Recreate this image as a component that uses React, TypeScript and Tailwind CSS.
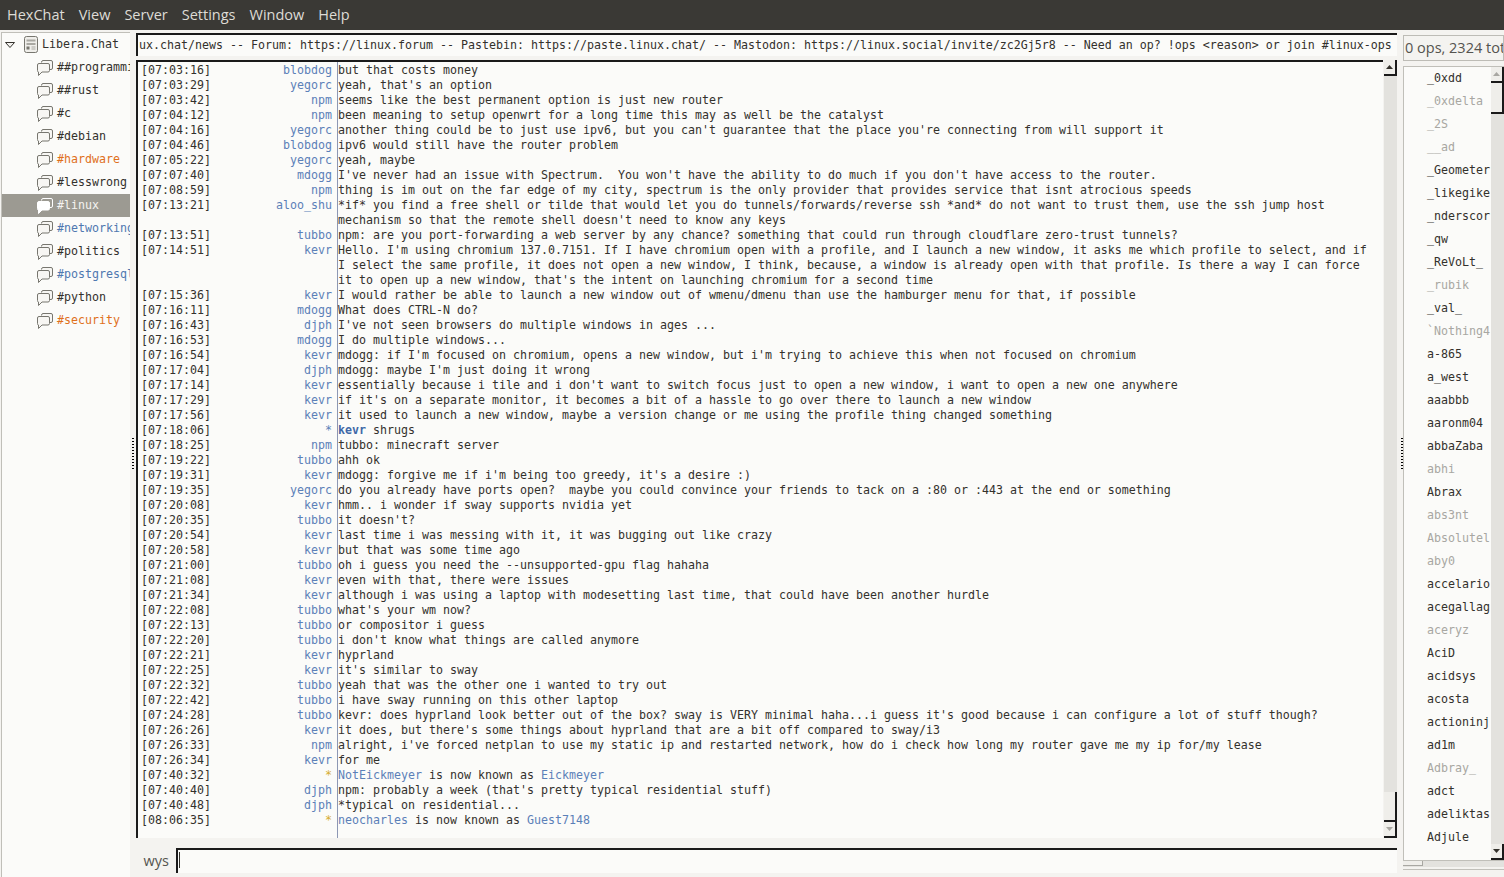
import React from 'react';

const menus = ['HexChat', 'View', 'Server', 'Settings', 'Window', 'Help'];

const channels = [
  { name: '##programming', color: 'text-[#33312c]' },
  { name: '##rust', color: 'text-[#33312c]' },
  { name: '#c', color: 'text-[#33312c]' },
  { name: '#debian', color: 'text-[#33312c]' },
  { name: '#hardware', color: 'text-[#e0701c]' },
  { name: '#lesswrong', color: 'text-[#33312c]' },
  { name: '#linux', color: 'text-[#f4f3f0]', active: true },
  { name: '#networking', color: 'text-[#4f78b0]' },
  { name: '#politics', color: 'text-[#33312c]' },
  { name: '#postgresql', color: 'text-[#4f78b0]' },
  { name: '#python', color: 'text-[#33312c]' },
  { name: '#security', color: 'text-[#e0701c]' },
];

type Line = { t: string; n: string; m: string[]; kind?: 'action' | 'nickchange'; a?: string; b?: string };

const lines: Line[] = [
  { t: '07:03:16', n: 'blobdog', m: ['but that costs money'] },
  { t: '07:03:29', n: 'yegorc', m: ["yeah, that's an option"] },
  { t: '07:03:42', n: 'npm', m: ['seems like the best permanent option is just new router'] },
  { t: '07:04:12', n: 'npm', m: ['been meaning to setup openwrt for a long time this may as well be the catalyst'] },
  { t: '07:04:16', n: 'yegorc', m: ["another thing could be to just use ipv6, but you can't guarantee that the place you're connecting from will support it"] },
  { t: '07:04:46', n: 'blobdog', m: ['ipv6 would still have the router problem'] },
  { t: '07:05:22', n: 'yegorc', m: ['yeah, maybe'] },
  { t: '07:07:40', n: 'mdogg', m: ["I've never had an issue with Spectrum.  You won't have the ability to do much if you don't have access to the router."] },
  { t: '07:08:59', n: 'npm', m: ['thing is im out on the far edge of my city, spectrum is the only provider that provides service that isnt atrocious speeds'] },
  { t: '07:13:21', n: 'aloo_shu', m: ['*if* you find a free shell or tilde that would let you do tunnels/forwards/reverse ssh *and* do not want to trust them, use the ssh jump host', "mechanism so that the remote shell doesn't need to know any keys"] },
  { t: '07:13:51', n: 'tubbo', m: ['npm: are you port-forwarding a web server by any chance? something that could run through cloudflare zero-trust tunnels?'] },
  { t: '07:14:51', n: 'kevr', m: ["Hello. I'm using chromium 137.0.7151. If I have chromium open with a profile, and I launch a new window, it asks me which profile to select, and if", 'I select the same profile, it does not open a new window, I think, because, a window is already open with that profile. Is there a way I can force', "it to open up a new window, that's the intent on launching chromium for a second time"] },
  { t: '07:15:36', n: 'kevr', m: ['I would rather be able to launch a new window out of wmenu/dmenu than use the hamburger menu for that, if possible'] },
  { t: '07:16:11', n: 'mdogg', m: ['What does CTRL-N do?'] },
  { t: '07:16:43', n: 'djph', m: ["I've not seen browsers do multiple windows in ages ..."] },
  { t: '07:16:53', n: 'mdogg', m: ['I do multiple windows...'] },
  { t: '07:16:54', n: 'kevr', m: ["mdogg: if I'm focused on chromium, opens a new window, but i'm trying to achieve this when not focused on chromium"] },
  { t: '07:17:04', n: 'djph', m: ["mdogg: maybe I'm just doing it wrong"] },
  { t: '07:17:14', n: 'kevr', m: ["essentially because i tile and i don't want to switch focus just to open a new window, i want to open a new one anywhere"] },
  { t: '07:17:29', n: 'kevr', m: ["if it's on a separate monitor, it becomes a bit of a hassle to go over there to launch a new window"] },
  { t: '07:17:56', n: 'kevr', m: ['it used to launch a new window, maybe a version change or me using the profile thing changed something'] },
  { t: '07:18:06', n: '*', kind: 'action', a: 'kevr', b: ' shrugs', m: [] },
  { t: '07:18:25', n: 'npm', m: ['tubbo: minecraft server'] },
  { t: '07:19:22', n: 'tubbo', m: ['ahh ok'] },
  { t: '07:19:31', n: 'kevr', m: ["mdogg: forgive me if i'm being too greedy, it's a desire :)"] },
  { t: '07:19:35', n: 'yegorc', m: ['do you already have ports open?  maybe you could convince your friends to tack on a :80 or :443 at the end or something'] },
  { t: '07:20:08', n: 'kevr', m: ['hmm.. i wonder if sway supports nvidia yet'] },
  { t: '07:20:35', n: 'tubbo', m: ["it doesn't?"] },
  { t: '07:20:54', n: 'kevr', m: ['last time i was messing with it, it was bugging out like crazy'] },
  { t: '07:20:58', n: 'kevr', m: ['but that was some time ago'] },
  { t: '07:21:00', n: 'tubbo', m: ['oh i guess you need the --unsupported-gpu flag hahaha'] },
  { t: '07:21:08', n: 'kevr', m: ['even with that, there were issues'] },
  { t: '07:21:34', n: 'kevr', m: ['although i was using a laptop with modesetting last time, that could have been another hurdle'] },
  { t: '07:22:08', n: 'tubbo', m: ["what's your wm now?"] },
  { t: '07:22:13', n: 'tubbo', m: ['or compositor i guess'] },
  { t: '07:22:20', n: 'tubbo', m: ["i don't know what things are called anymore"] },
  { t: '07:22:21', n: 'kevr', m: ['hyprland'] },
  { t: '07:22:25', n: 'kevr', m: ["it's similar to sway"] },
  { t: '07:22:32', n: 'tubbo', m: ['yeah that was the other one i wanted to try out'] },
  { t: '07:22:42', n: 'tubbo', m: ['i have sway running on this other laptop'] },
  { t: '07:24:28', n: 'tubbo', m: ["kevr: does hyprland look better out of the box? sway is VERY minimal haha...i guess it's good because i can configure a lot of stuff though?"] },
  { t: '07:26:26', n: 'kevr', m: ["it does, but there's some things about hyprland that are a bit off compared to sway/i3"] },
  { t: '07:26:33', n: 'npm', m: ["alright, i've forced netplan to use my static ip and restarted network, how do i check how long my router gave me my ip for/my lease"] },
  { t: '07:26:34', n: 'kevr', m: ['for me'] },
  { t: '07:40:32', n: '*', kind: 'nickchange', a: 'NotEickmeyer', b: 'Eickmeyer', m: [] },
  { t: '07:40:40', n: 'djph', m: ["npm: probably a week (that's pretty typical residential stuff)"] },
  { t: '07:40:48', n: 'djph', m: ['*typical on residential...'] },
  { t: '08:06:35', n: '*', kind: 'nickchange', a: 'neocharles', b: 'Guest7148', m: [] },
];

const nicks: [string, boolean][] = [
  ['_0xdd', false], ['_0xdelta', true], ['_2S', true], ['__ad', true], ['_Geometer', false], ['_likegike', false],
  ['_nderscor', false], ['_qw', false], ['_ReVoLt_', false], ['_rubik', true], ['_val_', false], ['`Nothing4', true],
  ['a-865', false], ['a_west', false], ['aaabbb', false], ['aaronm04', false], ['abbaZaba', false], ['abhi', true],
  ['Abrax', false], ['abs3nt', true], ['Absolutel', true], ['aby0', true], ['accelario', false], ['acegallag', false],
  ['aceryz', true], ['AciD', false], ['acidsys', false], ['acosta', false], ['actioninj', false], ['ad1m', false],
  ['Adbray_', true], ['adct', false], ['adeliktas', false], ['Adjule', false],
];

const mono = "font-['DejaVu_Sans_Mono',monospace]";

function ChatIcon({ light }: { light?: boolean }) {
  const stroke = light ? '#ffffff' : '#77766f';
  const fill = light ? '#9c9a92' : '#f7f6f3';
  return (
    <svg width="18" height="18" viewBox="0 0 18 18" className="shrink-0">
      <path d="M5.5 3.5 Q5.5 1.5 7 1.5 H15 Q16.5 1.5 16.5 3 V9 Q16.5 10.5 15 10.5 H13" fill={fill} stroke={stroke} />
      <path d="M3 4.5 H12 Q13.5 4.5 13.5 6 V11.5 Q13.5 13 12 13 H6 L2.5 16.5 V13 Q1.5 13 1.5 11.5 V6 Q1.5 4.5 3 4.5 Z" fill={light ? '#ffffff' : '#f7f6f3'} stroke={stroke} />
    </svg>
  );
}

function ServerIcon() {
  return (
    <svg width="16" height="18" viewBox="0 0 16 18" className="shrink-0">
      <rect x="1.5" y="0.5" width="13" height="16" rx="2" fill="#efeeea" stroke="#77766f" />
      <rect x="3.5" y="3.5" width="9" height="2" fill="#a9a8a2" />
      <rect x="3.5" y="7" width="9" height="2" fill="#a9a8a2" />
      <rect x="3.5" y="10.5" width="3" height="3" fill="#77766f" />
      <rect x="8.5" y="10.5" width="4" height="1" fill="#a9a8a2" />
      <rect x="8.5" y="12.5" width="4" height="1" fill="#a9a8a2" />
    </svg>
  );
}

function Grip() {
  return (
    <div className="flex flex-col gap-[2px]">
      {[0, 1, 2, 3, 4, 5, 6, 7, 8, 9, 10].map((i) => (
        <div key={i} className="w-[2px] h-[1px] bg-black" />
      ))}
    </div>
  );
}

function Stepper({ up, dim }: { up?: boolean; dim?: boolean }) {
  return (
    <div className="h-[16px] w-[13px] bg-[#efeeea] border-r-2 border-b-2 border-[#1a1a1a] flex items-center justify-center shrink-0">
      <svg width="7" height="4" viewBox="0 0 7 4">
        <path d={up ? 'M3.5 0 L7 4 H0 Z' : 'M0 0 H7 L3.5 4 Z'} fill={dim ? '#a8a7a2' : '#33312c'} />
      </svg>
    </div>
  );
}

function ChatLine({ line }: { line: Line }) {
  const isStar = line.n === '*';
  const star = line.kind === 'nickchange' ? 'text-[#d6ac32]' : 'text-[#5b80b8]';
  return (
    <div className="flex">
      <div className="w-[136px] shrink-0 pl-[3px] text-[#33312c]">[{line.t}]</div>
      <div className={`w-[61px] shrink-0 text-right pr-[3px] ${isStar ? star : 'text-[#5b80b8]'}`}>{line.n}</div>
      <div className="pl-[3px] whitespace-pre text-[#33312c]">
        {line.kind === 'action' && (
          <>
            <span className="font-bold text-[#3f69a8]">{line.a}</span>
            {line.b}
          </>
        )}
        {line.kind === 'nickchange' && (
          <>
            <span className="text-[#5b80b8]">{line.a}</span> is now known as <span className="text-[#5b80b8]">{line.b}</span>
          </>
        )}
        {line.m.map((text, i) => (
          <div key={i}>{text}</div>
        ))}
      </div>
    </div>
  );
}

export default function App() {
  return (
    <div className={`h-[877px] w-[1504px] overflow-hidden bg-[#f4f3f0] flex flex-col font-['Open_Sans',sans-serif]`}>
      {/* Menu bar */}
      <div className="h-[30px] bg-[#3a3935] flex items-center pl-[7px] gap-[14px] text-[14.5px] text-[#dedcd6] shrink-0">
        {menus.map((m) => (
          <span key={m}>{m}</span>
        ))}
      </div>

      <div className="flex-1 flex min-h-0">
        {/* Channel tree */}
        <div className={`w-[129px] shrink-0 ml-[1px] mt-[2px] border-l border-t border-[#c0bfb9] bg-[#fbfbf9] ${mono} text-[11.63px]`}>
          <div className="h-[23px] flex items-center text-[#33312c]">
            <svg width="10" height="6" viewBox="0 0 10 6" className="ml-[3px] mr-[8px]">
              <path d="M0.5 0.5 H9.5 L5 5.5 Z" fill="#f4f3f0" stroke="#33312c" />
            </svg>
            <ServerIcon />
            <span className="ml-[3px]">Libera.Chat</span>
          </div>
          {channels.map((c) => (
            <div key={c.name} className={`h-[23px] flex items-center pl-[34px] overflow-hidden whitespace-nowrap ${c.active ? 'bg-[#9c9a92]' : ''}`}>
              <ChatIcon light={c.active} />
              <span className={`ml-[3px] ${c.color}`}>{c.name}</span>
            </div>
          ))}
        </div>

        {/* Left splitter */}
        <div className="w-[6px] shrink-0 flex items-center justify-start pl-[2px]">
          <Grip />
        </div>

        {/* Main column */}
        <div className="w-[1261px] shrink-0 flex flex-col">
          <div className={`mt-[3px] h-[23px] border-l-2 border-t-2 border-[#1a1a1a] bg-[#fbfbf9] overflow-hidden whitespace-pre pl-[1px] ${mono} text-[11.63px] text-[#33312c] leading-[20px]`}>
            ux.chat/news -- Forum: https://linux.forum -- Pastebin: https://paste.linux.chat/ -- Mastodon: https://linux.social/invite/zc2Gj5r8 -- Need an op? !ops &lt;reason&gt; or join #linux-ops
          </div>
          <div className="mt-[4px] h-[778px] flex">
            <div className={`flex-1 relative border-l-2 border-t-2 border-[#1a1a1a] bg-[#fbfbf9] overflow-hidden pt-[1px] ${mono} text-[11.63px] leading-[15px]`}>
              <div className="absolute top-0 bottom-0 left-[199px] w-px bg-[#8d97b4]" />
              <div className="relative">
                {lines.map((l) => (
                  <ChatLine key={l.t + l.n} line={l} />
                ))}
              </div>
            </div>
            <div className="w-[13px] shrink-0 bg-[#e3e2de] flex flex-col ml-[1px]">
              <Stepper up />
              <div className="flex-1 flex flex-col justify-end">
                <div className="h-[30px] bg-[#efeeea] border-r-2 border-b-2 border-[#1a1a1a]" />
              </div>
              <Stepper dim />
            </div>
          </div>
          <div className="mt-[10px] flex items-stretch h-[25px]">
            <div className="w-[40px] text-right pr-[7px] text-[14.5px] text-[#55544f] leading-[26px]">wys</div>
            <div className="flex-1 border-l-2 border-t-2 border-[#1a1a1a] bg-[#fbfbf9] pl-[1px] pt-[2px]">
              <div className="w-px h-[16px] bg-[#33312c]" />
            </div>
          </div>
        </div>

        {/* Right splitter */}
        <div className="w-[7px] shrink-0 flex items-center justify-start pl-[4px]">
          <Grip />
        </div>

        {/* User list */}
        <div className="flex-1 flex flex-col min-w-0">
          <div className="mt-[5px] ml-[-1px] h-[26px] border border-[#bdbcb6] bg-[#f4f3f0] overflow-hidden whitespace-nowrap pl-[1px] text-[14.5px] text-[#55544f] leading-[24px]">
            0 ops, 2324 total
          </div>
          <div className="mt-[5px] ml-[-1px] h-[796px] flex border-l border-t border-[#c0bfb9] overflow-hidden">
            <div className={`flex-1 min-w-0 bg-[#fbfbf9] overflow-hidden pl-[23px] ${mono} text-[11.63px]`}>
              {nicks.map(([n, away]) => (
                <div key={n} className={`h-[23px] leading-[23px] whitespace-pre ${away ? 'text-[#a8a7a2]' : 'text-[#33312c]'}`}>
                  {n}
                </div>
              ))}
            </div>
            <div className="w-[13px] shrink-0 bg-[#e3e2de] flex flex-col">
              <Stepper up dim />
              <div className="h-[31px] bg-[#efeeea] border-r-2 border-b-2 border-[#1a1a1a]" />
              <div className="flex-1" />
              <Stepper />
            </div>
          </div>
          <div className="ml-[-1px] h-[7px] border-t border-[#c0bfb9] bg-[#e3e2de] shrink-0">
            <div className="w-[20px] h-[5px] bg-[#efeeea] border-r border-b border-[#a8a7a2]" />
          </div>
          <div className="ml-[-1px] mt-[2px] h-[8px] border-t border-[#c0bfb9] shrink-0" />
        </div>
      </div>
    </div>
  );
}
